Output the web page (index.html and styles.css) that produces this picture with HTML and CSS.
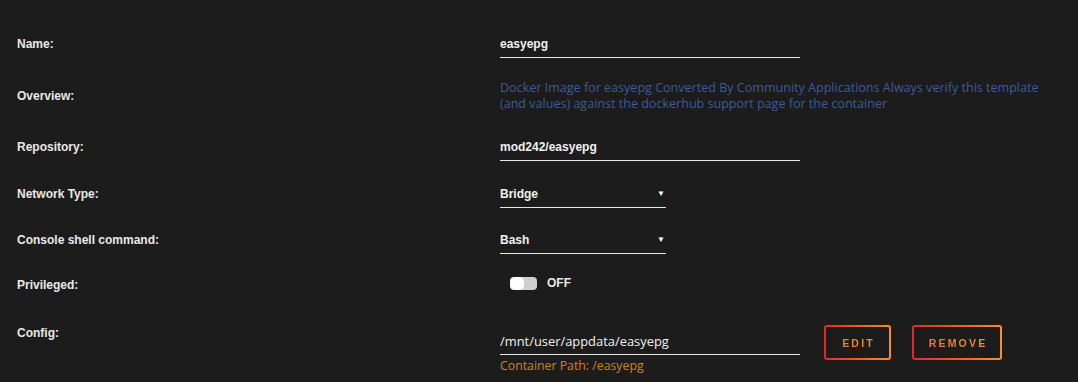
FILE: index.html
```html
<!DOCTYPE html>
<html>
<head>
<meta charset="utf-8">
<link rel="stylesheet" href="styles.css">
</head>
<body>
<div class="form">
  <div class="row row-name">
    <div class="label">Name:</div>
    <div class="field input"><span>easyepg</span></div>
  </div>
  <div class="row row-overview">
    <div class="label label-overview">Overview:</div>
    <div class="overview">Docker Image for easyepg Converted By Community Applications Always verify this template<br>(and values) against the dockerhub support page for the container</div>
  </div>
  <div class="row row-repo">
    <div class="label">Repository:</div>
    <div class="field input"><span>mod242/easyepg</span></div>
  </div>
  <div class="row row-network">
    <div class="label">Network Type:</div>
    <div class="field select"><span>Bridge</span><span class="arrow">&#9660;</span></div>
  </div>
  <div class="row row-console">
    <div class="label">Console shell command:</div>
    <div class="field select"><span>Bash</span><span class="arrow">&#9660;</span></div>
  </div>
  <div class="row row-priv">
    <div class="label">Privileged:</div>
    <div class="switch-wrap">
      <span class="switch"><span class="knob"></span></span>
      <span class="switch-text">OFF</span>
    </div>
  </div>
  <div class="row row-config">
    <div class="label">Config:</div>
    <div class="config-col">
      <div class="field input config-input"><span>/mnt/user/appdata/easyepg</span></div>
      <div class="hint">Container Path: /easyepg</div>
    </div>
    <button class="btn btn-edit"><span>EDIT</span></button>
    <button class="btn btn-remove"><span>REMOVE</span></button>
  </div>
</div>
</body>
</html>
```

FILE: styles.css
```css
html, body {
  margin: 0;
  padding: 0;
  background: #1c1c1c;
  width: 1078px;
  height: 382px;
  overflow: hidden;
}
body {
  font-family: "Liberation Sans", Arial, sans-serif;
  color: #f2f2f2;
}
.form {
  display: flex;
  flex-direction: column;
}
.row {
  display: flex;
  align-items: flex-start;
}
.label {
  box-sizing: border-box;
  width: 500px;
  padding-left: 17px;
  font-size: 12px;
  font-weight: 700;
  line-height: 18px;
  color: #e8e8e8;
}
.field {
  box-sizing: border-box;
  font-size: 12px;
  font-weight: 700;
  line-height: 18px;
  color: #f0f0f0;
  padding-bottom: 4px;
  border-bottom: 1px solid #e6e6e6;
}
.input { width: 300px; }
.select {
  width: 166px;
  display: flex;
  justify-content: space-between;
  align-items: center;
}
.arrow {
  font-size: 8px;
  line-height: 18px;
  margin-right: 1px;
  color: #ffffff;
}
.row-name { margin-top: 35px; }
.row-overview { margin-top: 22px; }
.label-overview { padding-top: 8px; line-height: 16px; }
.overview {
  font-family: "Open Sans", "Liberation Sans", sans-serif;
  font-size: 12.55px;
  line-height: 16px;
  color: #3c5a98;
}
.row-repo { margin-top: 26px; }
.row-network { margin-top: 24px; }
.row-console { margin-top: 23px; }
.row-priv { margin-top: 22px; }
.switch-wrap {
  display: flex;
  align-items: center;
  height: 14px;
  margin-left: 10px;
}
.switch {
  position: relative;
  width: 27px;
  height: 13px;
  border-radius: 4px;
  background: #cfcfcf;
}
.knob {
  position: absolute;
  left: 0;
  top: 0;
  width: 14px;
  height: 13px;
  border-radius: 5px;
  background: #ffffff;
}
.switch-text {
  margin-left: 10px;
  font-size: 12px;
  font-weight: 700;
  color: #e8e8e8;
}
.row-config { margin-top: 30px; }
.config-col {
  display: flex;
  flex-direction: column;
  padding-top: 8px;
}
.config-input {
  font-family: "Open Sans", "Liberation Sans", sans-serif;
  font-weight: 400;
  font-size: 12.9px;
}
.hint {
  margin-top: 3px;
  font-family: "Open Sans", "Liberation Sans", sans-serif;
  font-size: 12.3px;
  line-height: 16px;
  color: #c98716;
}
.btn {
  box-sizing: border-box;
  height: 35px;
  margin-top: 1px;
  border: 2px solid transparent;
  border-radius: 3px;
  background: linear-gradient(#1c1c1c, #1c1c1c) padding-box,
              linear-gradient(90deg, #e22828, #ff8c2f) border-box;
  font-family: "Liberation Sans", Arial, sans-serif;
  font-size: 10.5px;
  font-weight: 700;
  letter-spacing: 2.2px;
  padding: 0 0 0 2px;
  cursor: pointer;
}
.btn span {
  background: linear-gradient(90deg, #ee7a2c, #ff8c2f);
  -webkit-background-clip: text;
  background-clip: text;
  color: transparent;
}
.btn-edit { width: 67px; margin-left: 24px; }
.btn-remove { width: 90px; margin-left: 21px; }
```
